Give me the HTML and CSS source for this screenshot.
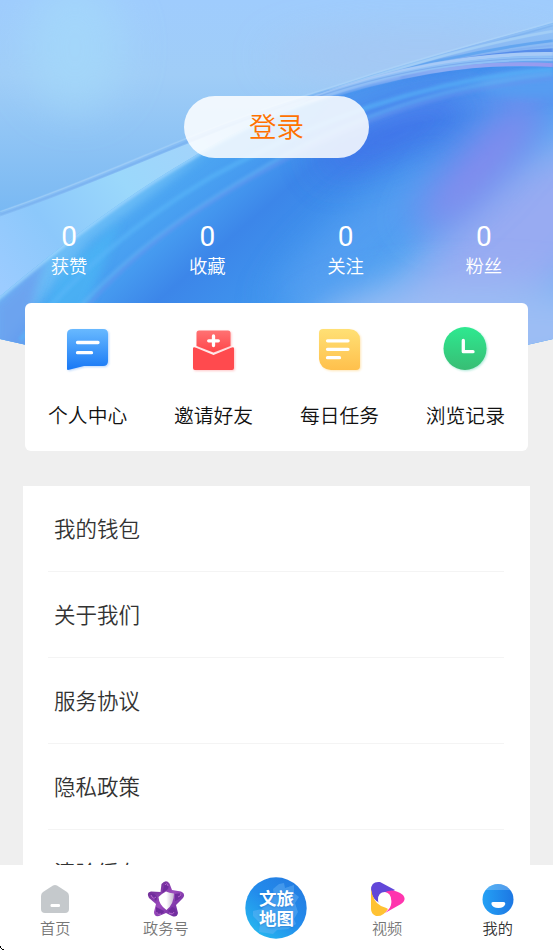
FILE: index.html
```html
<!DOCTYPE html>
<html lang="zh-CN">
<head>
<meta charset="utf-8">
<meta name="viewport" content="width=device-width, initial-scale=1">
<title>我的</title>
<link rel="stylesheet" href="styles.css">
</head>
<body>
<div class="app">
  <main class="content">
    <header class="hero">
      <svg class="hero-art" viewBox="0 0 553 380" aria-hidden="true">
        <defs>
          <linearGradient id="sky" x1="0" y1="0" x2="0" y2="1">
            <stop offset="0" stop-color="#9fccfd"/><stop offset=".2" stop-color="#a0cdf7"/><stop offset=".5" stop-color="#80bcf3"/><stop offset=".65" stop-color="#6eb4f4"/>
          </linearGradient>
          <linearGradient id="pale" gradientUnits="userSpaceOnUse" x1="0" y1="300" x2="300" y2="100">
            <stop offset="0" stop-color="#9cccff"/><stop offset=".2" stop-color="#8cc8fb"/><stop offset=".45" stop-color="#9bd8fb"/><stop offset=".7" stop-color="#a3d3fb"/><stop offset="1" stop-color="#82b9f5"/>
          </linearGradient>
          <linearGradient id="sea" gradientUnits="userSpaceOnUse" x1="80" y1="170" x2="290" y2="400">
            <stop offset="0" stop-color="#6fbdf7"/><stop offset=".2" stop-color="#4fabf3"/><stop offset=".38" stop-color="#469bf0"/><stop offset=".52" stop-color="#3c86e9"/><stop offset=".85" stop-color="#419bf0"/><stop offset="1" stop-color="#63adf3"/>
          </linearGradient>
          <linearGradient id="ribbon" x1="0" y1="0" x2="0" y2="1">
            <stop offset="0" stop-color="#91c2f6"/><stop offset=".4" stop-color="#89b8f3"/><stop offset=".55" stop-color="#589cef"/><stop offset="1" stop-color="#5288ec"/>
          </linearGradient>
          <linearGradient id="violet" x1="0" y1="0" x2="1" y2="0"><stop offset="0" stop-color="#8caef3" stop-opacity="0"/><stop offset=".55" stop-color="#8caef3"/><stop offset="1" stop-color="#9a98ef"/></linearGradient>
          <filter id="b1" x="-20%" y="-20%" width="140%" height="140%"><feGaussianBlur stdDeviation=".8"/></filter>
          <filter id="b2" x="-20%" y="-20%" width="140%" height="140%"><feGaussianBlur stdDeviation="1.8"/></filter>
          <filter id="b4" x="-20%" y="-20%" width="140%" height="140%"><feGaussianBlur stdDeviation="5"/></filter>
          <filter id="b20" x="-100%" y="-200%" width="300%" height="500%"><feGaussianBlur stdDeviation="20"/></filter>
          <clipPath id="dome"><path d="M0 0H553V339Q276 405 0 339Z"/></clipPath>
          <clipPath id="wave"><path d="M-5 318C60 260 125 208 190 168C250 127 330 94 400 80C450 70 500 69 553 72V400H-5Z"/></clipPath>
        </defs>
        <g clip-path="url(#dome)">
         <g transform="scale(1 .945)">
          <rect width="553" height="400" fill="url(#sky)"/>
          <ellipse cx="75" cy="50" rx="50" ry="70" fill="#a6dcfa" opacity=".6" filter="url(#b20)"/>
          <ellipse cx="420" cy="60" rx="150" ry="30" fill="#a6c6f2" opacity=".7" filter="url(#b20)"/>
          <path d="M0 225C65 202 125 174 185 148C265 113 320 98 370 80C435 58 495 42 553 24V90L300 130L160 210L0 350Z" fill="#86bdf5"/>
          <path d="M0 229C65 206 130 176 190 151C235 132 280 113 315 102L350 94L190 190L0 350Z" fill="url(#pale)"/>
          <path d="M320 99C390 75 465 48 553 25V75H400C365 85 340 93 310 105Z" fill="url(#ribbon)"/>
          <g fill="none" filter="url(#b1)">
            <path d="M0 224C65 201 125 173 185 147C265 112 320 97 370 79C435 57 495 41 553 23" stroke="#aed5fa" stroke-width="1.2" opacity=".7"/>
            <path d="M0 227C65 204 125 177 185 151C265 117 320 99 370 82C435 61 495 45 553 27" stroke="#6fa9ea" stroke-width="1.6" opacity=".45"/>
            <path d="M330 96C405 70 475 47 553 33" stroke="#a2cdf6" stroke-width="3"/>
            <path d="M320 100C410 70 480 52 553 43" stroke="#64a6f0" stroke-width="3"/>
            <path d="M340 93C420 67 490 55 553 48" stroke="#83b2f3" stroke-width="2"/>
            <path d="M330 98C405 72 480 57 553 53" stroke="#4b83e8" stroke-width="4" opacity=".8"/>
          </g>
          <g clip-path="url(#wave)">
            <rect width="553" height="400" fill="url(#sea)"/>
            <path d="M-20 330L70 245L160 183L215 155L90 255L-20 400Z" fill="#85cdfa" opacity=".5" filter="url(#b4)"/>
            <path d="M10 400L60 290L120 235L100 290L60 400Z" fill="#4cbaf6" opacity=".6" filter="url(#b4)"/>
            <path d="M330 100C400 75 480 70 560 75V110C470 112 380 130 300 160Z" fill="#4f96f0" opacity=".8" filter="url(#b4)"/>
            <ellipse cx="395" cy="143" rx="85" ry="22" transform="rotate(-24 395 143)" fill="#456de9" opacity=".85" filter="url(#b20)"/>
            <ellipse cx="365" cy="250" rx="115" ry="30" transform="rotate(-42 365 250)" fill="#5fa2f2" opacity=".7" filter="url(#b20)"/>
            <ellipse cx="515" cy="262" rx="145" ry="60" transform="rotate(-45 515 262)" fill="#98abf2" filter="url(#b20)"/>
            <ellipse cx="482" cy="172" rx="95" ry="24" transform="rotate(-50 482 172)" fill="#8a88ed" filter="url(#b20)"/>
            <ellipse cx="480" cy="350" rx="170" ry="50" fill="#9cbdf4" filter="url(#b20)"/>
            <ellipse cx="535" cy="90" rx="55" ry="13" fill="#579cf1" filter="url(#b4)"/>
            <path d="M-5 400L-5 322Q25 292 48 272Q22 325 35 400Z" fill="#6d9eee" opacity=".8" filter="url(#b4)"/>
            <g fill="none" filter="url(#b2)">
              <path d="M-5 318C60 260 125 208 190 168C250 127 330 94 400 80" stroke="#a9dbff" stroke-width="5" opacity=".7"/>
              <path d="M20 360C75 290 135 235 210 188C310 130 420 85 553 73" stroke="#58b5f8" stroke-width="5" opacity=".6"/>
              <path d="M45 370C110 275 200 215 285 164C380 111 465 88 553 78" stroke="#68b5f6" stroke-width="4" opacity=".5"/>
              <path d="M60 360C130 260 210 210 310 155C395 112 470 92 553 83" stroke="#6693f0" stroke-width="4" opacity=".5"/>
            </g>
          </g>
          <g fill="none" filter="url(#b1)">
            <path d="M315 103C390 73 475 56 553 57" stroke="#a7caf7" stroke-width="4"/>
            <path d="M310 106C390 76 475 60 553 62" stroke="#8fc0f6" stroke-width="5"/>
            <path d="M300 113C385 80 475 63 553 69" stroke="url(#violet)" stroke-width="4"/>
            <path d="M305 107C390 75 475 60 553 62" stroke="#79a9ed" stroke-width="1"/>
          </g>
         </g>
        </g>
      </svg>
      <button class="login">登录</button>
      <div class="stats">
        <div class="stat"><b>0</b><span>获赞</span></div>
        <div class="stat"><b>0</b><span>收藏</span></div>
        <div class="stat"><b>0</b><span>关注</span></div>
        <div class="stat"><b>0</b><span>粉丝</span></div>
      </div>
    </header>

    <section class="shortcuts">
      <a class="shortcut">
        <svg class="shadow-blue" viewBox="0 0 46 46"><defs><linearGradient id="blue" x2="0" y2="1"><stop stop-color="#68b9ff"/><stop offset="1" stop-color="#1878f5"/></linearGradient></defs><path d="M7 3H37Q42 3 42 8V35Q42 40 37 40H18L2 44Q1 44 1 43V8Q1 3 7 3Z" fill="url(#blue)"/><path d="M11.500 16.500H32M11.500 26.700H25.500" class="line"/></svg>
        <span>个人中心</span>
      </a>
      <a class="shortcut">
        <svg class="shadow-red" viewBox="0 0 46 46"><defs><linearGradient id="red" x2="0" y2="1"><stop stop-color="#ff7273"/><stop offset="1" stop-color="#ff4549"/></linearGradient></defs><path d="M7 4.500H36Q38.500 4.500 38.500 7V20L21.500 26.500L4.500 20V7Q4.500 4.500 7 4.500Z" fill="url(#red)"/><path d="M1 22.500Q1 20.500 4 21.700L21.500 29L39 21.700Q42 20.500 42 22.500V42Q42 44 40 44H3Q1 44 1 42Z" fill="#ff4a4e"/><path d="M21.500 10V19.500M16.700 14.800H26.300" class="line"/></svg>
        <span>邀请好友</span>
      </a>
      <a class="shortcut">
        <svg class="shadow-yellow" viewBox="0 0 46 46"><defs><linearGradient id="yellow" x2="0" y2="1"><stop stop-color="#ffe075"/><stop offset="1" stop-color="#ffc04c"/></linearGradient></defs><path d="M5 3H31Q42 4 42 14V40Q42 44 38 44H13Q2 43 1 33V7Q1 3 5 3Z" fill="url(#yellow)"/><path d="M9.500 14.800H30M9.500 23.300H30M9.500 31.700H21.500" class="line"/></svg>
        <span>每日任务</span>
      </a>
      <a class="shortcut">
        <svg class="shadow-green" viewBox="0 0 46 46"><defs><linearGradient id="green" x2="0" y2="1"><stop stop-color="#2ee990"/><stop offset="1" stop-color="#38bd74"/></linearGradient></defs><circle cx="21" cy="22.500" r="21.500" fill="url(#green)"/><path d="M19.300 14.500V25.700H29" class="line"/></svg>
        <span>浏览记录</span>
      </a>
    </section>

    <ul class="menu">
      <li>我的钱包</li>
      <li>关于我们</li>
      <li>服务协议</li>
      <li>隐私政策</li>
      <li>清除缓存</li>
    </ul>
  </main>

  <nav class="tabs">
    <a class="tab">
      <svg viewBox="0 0 38 38"><path d="M17 5.600Q19 4.500 21 5.600L31 12Q33 13.500 33 16V29Q33 33 29 33H9Q5 33 5 29V16Q5 13.500 7 12Z" fill="#c5c9cc"/><rect x="14.500" y="24" width="9.500" height="3" rx="1.200" fill="#fff"/></svg>
      <span>首页</span>
    </a>
    <a class="tab">
      <svg viewBox="0 0 38 38"><defs><linearGradient id="purple" x2="1" y2="1"><stop stop-color="#5c2186"/><stop offset=".5" stop-color="#9b4abd"/><stop offset="1" stop-color="#5f2393"/></linearGradient><linearGradient id="core"><stop stop-color="#fff"/><stop offset=".5" stop-color="#fff"/><stop offset="1" stop-color="#c4b4cf"/></linearGradient></defs><path d="M14.500 4Q19-1 22.500 3.500L25 10L34 11.500Q39 13.500 36 18L29 25L31 33Q30 38 25 36L19 33L12 36Q7 37 7 32L9 24L2 18Q-1 12.500 4 11.500L13.500 12Z" fill="url(#purple)"/><path d="M15 14L19 11.500Q22 13 27 13.500Q27 24 19.500 30Q12 25 11.500 17Z" fill="url(#core)"/><path d="M18 3Q24 6 20 10L15 13ZM28 14L35 13Q35 19 28 21ZM25 27Q30 28 28 34L21 31ZM9 27L17 31Q16 35 9 34ZM3 14Q9 13 10 18L9 21Z" fill="#702b9d"/><g fill="none" stroke="#b566cd"><path d="M18 5Q20 2 21 6M31 17Q35 16 34 13M22 33Q26 35 27 32M10 32Q9 35 14 34M4 15Q6 20 9 17"/></g></svg>
      <span>政务号</span>
    </a>
    <a class="tab tab-map">
      <span class="map-badge">
        <svg viewBox="0 0 62 62"><defs><linearGradient id="mapbg" x1="1" y1="0" x2=".2" y2="1"><stop stop-color="#2478df"/><stop offset=".55" stop-color="#238cec"/><stop offset="1" stop-color="#26b9ef"/></linearGradient></defs><circle cx="31" cy="31" r="30.700" fill="url(#mapbg)"/><path d="M34 7L39 6L40 11L49 8L49 16L54 20L50 26L53 35L49 42L51 47L43 52L32 53L28 57L14 55L15 46L8 39L8 34L17 32L22 23L29 19L28 12Z" fill="#72baf5" opacity=".4"/></svg>
        <span class="map-name"><span>文旅</span><span>地图</span></span>
      </span>
    </a>
    <a class="tab">
      <svg viewBox="0 0 38 38"><path d="M3 10Q3 1 12 2L27 10L14 17L12 23Q4 20 3 10Z" fill="#6247d9"/><path d="M3 9Q5 22 13 26Q19 28 20 29Q15 37 8 36Q3 34 3 29Z" fill="#ffc233"/><path d="M15 13Q25 7 35 15Q39 20 33 24L17 33Q25 27 23 19Q22 14 15 13Z" fill="#ff35ae"/><path d="M10 20Q10 12 17 12Q23 13 23 20L21 26Q18 24 13 24Q10 23 10 20Z" fill="#fff"/></svg>
      <span>视频</span>
    </a>
    <a class="tab active">
      <svg viewBox="0 0 38 38"><defs><linearGradient id="face"><stop stop-color="#24a1f5"/><stop offset="1" stop-color="#1d77e3"/></linearGradient><clipPath id="head"><circle cx="19" cy="19.500" r="15.500"/></clipPath></defs><circle cx="19" cy="19.500" r="15.500" fill="url(#face)"/><path d="M0 0H38V10H0Z" fill="#fff" opacity=".22" clip-path="url(#head)"/><path d="M14 22H24.500Q26.500 22 26.300 24Q25 28 19.500 28Q13.500 28 12.400 24Q12 22 14 22Z" fill="#fff"/></svg>
      <span>我的</span>
    </a>
  </nav>
  <svg class="pointer" viewBox="0 0 5 5"><path d="M0 0H1V2H0ZM1 2H2V3H1ZM2 3H3V4H2ZM3 3H4V4H3Z"/></svg>
</div>
</body>
</html>
```
FILE: styles.css
```css
* { box-sizing: border-box; }
body {
  margin: 0;
  background: #efefef;
  color: #333;
  font-family: Roboto, "Noto Sans CJK SC", sans-serif;
  font-weight: 350;
}
.app {
  position: relative;
  display: flex;
  flex-direction: column;
  height: 951px;
  overflow: hidden;
}
.content {
  flex: 1;
  min-height: 0;
  overflow: hidden;
}
.hero {
  position: relative;
  height: 303px;
  padding-top: 96px;
  display: flex;
  flex-direction: column;
  align-items: center;
}
.hero-art {
  position: absolute;
  top: 0;
  left: 0;
  width: 553px;
  height: 380px;
}
.login {
  position: relative;
  width: 185px;
  height: 62px;
  padding: 2px 0 0;
  border: 0;
  border-radius: 31px;
  background: rgba(255, 255, 255, .85);
  color: #ff7200;
  font: 350 27.500px/60px Roboto, "Noto Sans CJK SC", sans-serif;
}
.stats {
  position: relative;
  width: 100%;
  margin-top: 62px;
  display: grid;
  grid-template-columns: repeat(4, 1fr);
  color: #fff;
}
.stat {
  display: flex;
  flex-direction: column;
  align-items: center;
}
.stat b { font: 28px/33px Roboto, sans-serif; }
.stat span { font-size: 18.400px; line-height: 27px; }
.shortcuts {
  position: relative;
  height: 148px;
  margin: 0 24.700px;
  display: grid;
  grid-template-columns: repeat(4, 1fr);
  border-radius: 6px;
  background: #fff;
}
.shortcut {
  display: flex;
  flex-direction: column;
  align-items: center;
  padding-top: 23px;
  color: #111;
  font-size: 19.800px;
  line-height: 30px;
}
.shortcut svg {
  width: 46px;
  height: 46px;
  margin: 0 0 30px 3px;
  overflow: visible;
}
.line {
  fill: none;
  stroke: #fff;
  stroke-width: 3.300;
  stroke-linecap: round;
  stroke-linejoin: round;
}
.shadow-blue { filter: drop-shadow(1px 1px 1px rgba(24, 120, 245, .3)); }
.shadow-red { filter: drop-shadow(1px 1px 1px rgba(255, 69, 73, .3)); }
.shadow-yellow { filter: drop-shadow(1px 1px 1px rgba(255, 192, 76, .4)); }
.shadow-green { filter: drop-shadow(1px 1px 1px rgba(56, 200, 160, .4)); }
.menu {
  list-style: none;
  margin: 35px 23px 0;
  padding: 0 26px 0 25px;
  background: #fff;
}
.menu li {
  height: 86px;
  padding: 1px 0 0 6px;
  border-bottom: 1px solid #f4f4f4;
  font-size: 21.500px;
  line-height: 86px;
}
.tabs {
  position: relative;
  height: 86px;
  display: grid;
  grid-template-columns: repeat(5, 1fr);
  background: #fff;
}
.tab {
  display: flex;
  flex-direction: column;
  align-items: center;
  padding-top: 15px;
  color: #777;
  font-size: 15.200px;
  line-height: 22px;
}
.tab > svg { width: 38px; height: 38px; }
.active { color: #333; }
.tab-map { padding-top: 12px; }
.map-badge {
  display: grid;
  place-items: center;
  width: 62px;
  height: 62px;
  color: #fff;
  font: 700 17.500px/20.500px "Noto Sans CJK SC", sans-serif;
}
.map-badge > * { grid-area: 1 / 1; }
.map-badge svg { width: 62px; height: 62px; }
.map-name {
  z-index: 1;
  display: flex;
  flex-direction: column;
  text-shadow: 0 1px 2px rgba(16, 90, 180, .4);
}
.pointer {
  position: absolute;
  left: 0;
  bottom: 0;
  width: 5px;
  height: 5px;
}
```
